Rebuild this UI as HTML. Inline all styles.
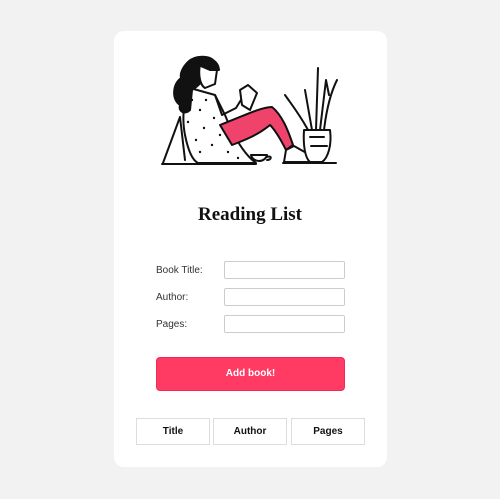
<!DOCTYPE html>
<html><head><style>
*{margin:0;padding:0;box-sizing:border-box}
body{width:500px;height:499px;background:#f2f2f2;position:relative;font-family:"Liberation Sans",sans-serif;overflow:hidden}
.card{position:absolute;left:114px;top:31px;width:273px;height:436px;background:#fff;border-radius:10px}
.t{position:absolute;left:0;width:500px;top:204px;text-align:center;font-family:"Liberation Serif",serif;font-weight:bold;font-size:19px;color:#111}
.l{position:absolute;left:156px;font-size:10px;color:#333}
.i{position:absolute;left:224px;width:121px;height:18px;border:1px solid #ccc;border-radius:2px;background:#fff}
.btn{position:absolute;left:156px;top:357px;width:189px;height:34px;background:#ff3b64;border:1px solid #f02a55;border-radius:4px;color:#fff;font-weight:bold;font-size:10px;text-align:center;line-height:32px}
.c{position:absolute;top:418px;height:27px;border:1px solid #ddd;font-weight:bold;font-size:10px;text-align:center;line-height:25px;color:#111}
</style></head><body>
<div class="card"></div>
<svg style="position:absolute;left:0;top:0" width="500" height="200" viewBox="0 0 500 200" fill="none" stroke="#111" stroke-width="2" stroke-linecap="round" stroke-linejoin="round">
<path d="M163 163 L180 117 L185 160" fill="#fff"/>
<path d="M162 164 H256 M283 163 H336"/>
<path d="M190 88 C183 100 182 120 185 135 C188 150 192 160 198 163 L256 163 C245 155 235 140 225 115 L215 95 Z" fill="#fff"/>
<path d="M181 78 C172 85 172 100 180 105 C178 112 185 115 190 110 L192 90 C200 85 205 78 210 72 L215 62 C210 55 195 55 188 62 C182 68 180 74 181 78Z" fill="#111"/>
<path d="M200 64 C205 60 215 62 217 70 L215 84 L205 88 C200 85 198 75 200 64Z" fill="#fff"/>
<path d="M196 64 C205 56 218 58 219 70 L210 70 Z" fill="#111"/>
<path d="M215 95 L222 115 L236 108 L244 95"/>
<path d="M240 90 L248 85 L257 93 L250 110 L242 105 Z" fill="#fff"/>
<path d="M220 125 C245 115 262 107 272 107 C282 115 288 130 293 145 L286 150 C280 138 275 130 270 125 C258 135 245 140 232 145 Z" fill="#f0436b"/>
<path d="M286 150 L294 146 L310 155 L316 162 L284 162 Z" fill="#fff"/>
<path d="M251 155 H267 C265 163 253 163 251 155 M267 157 C272 155 272 160 267 160"/>
<path d="M304 130 H330 C332 145 328 158 322 162 H310 C305 158 303 145 304 130Z" fill="#fff"/>
<path d="M310 137 H324 M311 146 H327"/>
<path d="M308 130 C300 115 292 105 285 95 M312 130 L305 90 M316 130 L318 68 M320 130 L326 80 L329 95 M324 130 C327 105 332 90 337 80"/>
<g fill="#111" stroke="none"><circle cx="192" cy="100" r="1.2"/><circle cx="200" cy="110" r="1.2"/><circle cx="188" cy="122" r="1.2"/><circle cx="204" cy="128" r="1.2"/><circle cx="196" cy="140" r="1.2"/><circle cx="212" cy="145" r="1.2"/><circle cx="220" cy="135" r="1.2"/><circle cx="206" cy="100" r="1.2"/><circle cx="228" cy="152" r="1.2"/><circle cx="200" cy="152" r="1.2"/><circle cx="214" cy="118" r="1.2"/><circle cx="238" cy="158" r="1.2"/></g>
</svg>
<div class="t">Reading List</div>
<div class="l" style="top:265px">Book Title:</div><div class="i" style="top:261px"></div>
<div class="l" style="top:292px">Author:</div><div class="i" style="top:288px"></div>
<div class="l" style="top:319px">Pages:</div><div class="i" style="top:315px"></div>
<div class="btn">Add book!</div>
<div class="c" style="left:136px;width:74px">Title</div>
<div class="c" style="left:213px;width:74px">Author</div>
<div class="c" style="left:291px;width:74px">Pages</div>
</body></html>
